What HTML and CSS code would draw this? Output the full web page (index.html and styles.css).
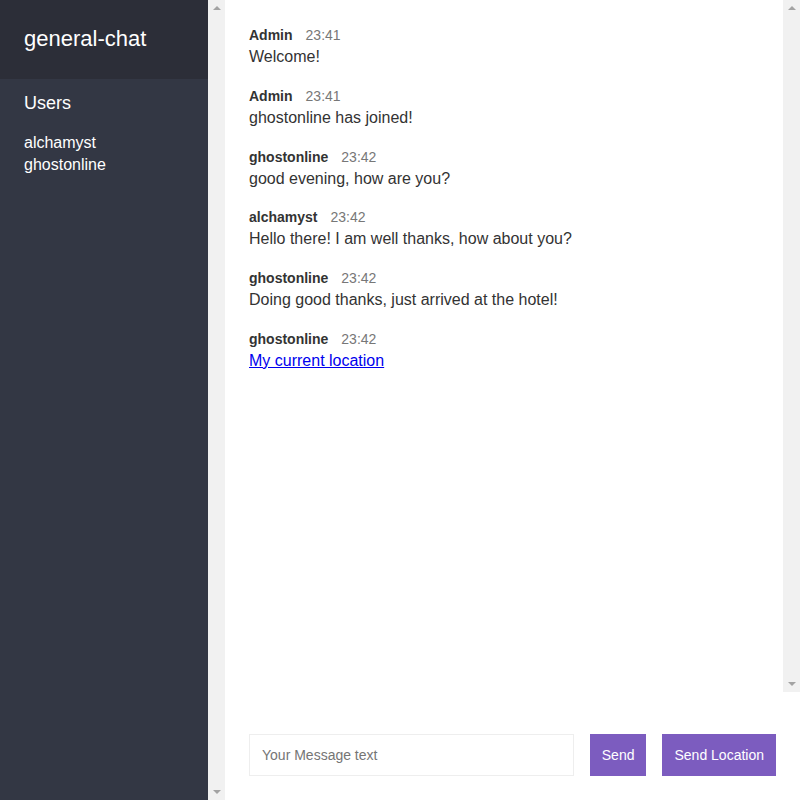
FILE: index.html
```html
<!DOCTYPE html>
<html>
<head>
<meta charset="utf-8">
<link rel="stylesheet" href="styles.css">
</head>
<body>
<div class="chat">
  <aside class="sidebar">
    <h2 class="room-title">general-chat</h2>
    <h3 class="list-title">Users</h3>
    <ul class="users">
      <li>alchamyst</li>
      <li>ghostonline</li>
    </ul>
  </aside>
  <div class="scrollbar full">
    <span class="arrow up"></span>
    <span class="arrow down"></span>
  </div>
  <main class="main">
    <div class="messages-wrap">
      <div class="messages">
        <div class="message">
          <div class="meta"><span class="name">Admin</span><span class="time">23:41</span></div>
          <p class="body">Welcome!</p>
        </div>
        <div class="message">
          <div class="meta"><span class="name">Admin</span><span class="time">23:41</span></div>
          <p class="body">ghostonline has joined!</p>
        </div>
        <div class="message">
          <div class="meta"><span class="name">ghostonline</span><span class="time">23:42</span></div>
          <p class="body">good evening, how are you?</p>
        </div>
        <div class="message">
          <div class="meta"><span class="name">alchamyst</span><span class="time">23:42</span></div>
          <p class="body">Hello there! I am well thanks, how about you?</p>
        </div>
        <div class="message">
          <div class="meta"><span class="name">ghostonline</span><span class="time">23:42</span></div>
          <p class="body">Doing good thanks, just arrived at the hotel!</p>
        </div>
        <div class="message">
          <div class="meta"><span class="name">ghostonline</span><span class="time">23:42</span></div>
          <p class="body"><a href="#" class="link">My current location</a></p>
        </div>
      </div>
      <div class="scrollbar">
        <span class="arrow up"></span>
        <span class="arrow down"></span>
      </div>
    </div>
    <form class="compose">
      <input class="input" type="text" placeholder="Your Message text" autofocus>
      <button class="btn" type="button">Send</button>
      <button class="btn" type="button">Send Location</button>
    </form>
  </main>
</div>
</body>
</html>
```

FILE: styles.css
```css
* { box-sizing: border-box; }
html, body { margin: 0; padding: 0; height: 100%; }
body {
  font-family: "Liberation Sans", Arial, sans-serif;
  color: #333;
}
.chat {
  display: flex;
  height: 800px;
}
.sidebar {
  width: 208px;
  flex-shrink: 0;
  background: #333744;
  color: #fff;
}
.room-title {
  margin: 0;
  height: 79px;
  background: #2c2e38;
  font-size: 22px;
  font-weight: normal;
  padding: 27px 24px 0;
  line-height: 24px;
}
.list-title {
  margin: 0;
  font-size: 18px;
  font-weight: normal;
  padding: 14px 24px 0;
  line-height: 20px;
}
.users {
  list-style: none;
  margin: 0;
  padding: 19px 24px 0;
  font-size: 16px;
  line-height: 22px;
}
.scrollbar {
  width: 17px;
  flex-shrink: 0;
  background: #f1f1f1;
  display: flex;
  flex-direction: column;
  justify-content: space-between;
  align-items: center;
  padding: 6px 0;
}
.arrow {
  width: 0;
  height: 0;
  border-left: 4px solid transparent;
  border-right: 4px solid transparent;
}
.arrow.up { border-bottom: 4px solid #a3a3a3; }
.arrow.down { border-top: 4px solid #a3a3a3; }
.main {
  flex: 1;
  display: flex;
  flex-direction: column;
  background: #fff;
}
.messages-wrap {
  height: 692px;
  display: flex;
}
.messages {
  flex: 1;
  padding: 27px 24px 0;
}
.message { margin-bottom: 21.8px; }
.meta {
  display: flex;
  font-size: 14px;
  line-height: 16px;
  margin-bottom: 5px;
}
.name {
  font-weight: bold;
  margin-right: 13px;
}
.time { color: #777; }
.body {
  margin: 0;
  font-size: 16px;
  line-height: 18px;
}
.link { color: #0000ee; }
.compose {
  flex: 1;
  display: flex;
  align-items: flex-start;
  gap: 16px;
  padding: 42px 24px 0;
  margin: 0;
}
.input {
  flex: 1;
  height: 42px;
  border: 1px solid #eee;
  padding: 0 12px;
  font-family: inherit;
  font-size: 14px;
  color: #333;
  outline: none;
  caret-color: #000;
}
.input::placeholder { color: #757575; }
.btn {
  height: 42px;
  padding: 0 12px;
  border: none;
  background: #7c5cbf;
  color: #fff;
  font-family: inherit;
  font-size: 14px;
}
```
